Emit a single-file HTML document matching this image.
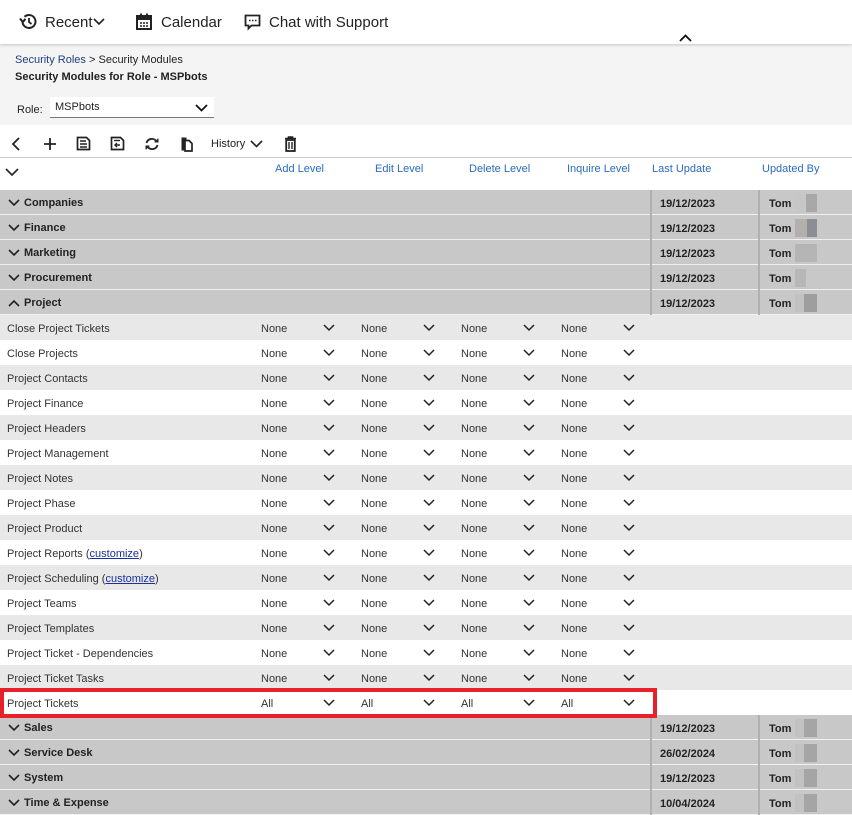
<!DOCTYPE html>
<html><head><meta charset="utf-8"><style>
*{margin:0;padding:0;box-sizing:border-box}
body{width:852px;height:815px;overflow:hidden;background:#fff;font-family:"Liberation Sans",sans-serif;position:relative;color:#222}
.a{position:absolute}
.top{left:0;top:0;width:852px;height:44px;background:#fff;box-shadow:0 1px 3px rgba(0,0,0,.2);z-index:2}
.nav{font-size:15px;color:#222;top:14px}
.grey{left:0;top:44px;width:852px;height:81px;background:#f4f4f4}
.tb{left:0;top:125px;width:852px;height:33px;background:#fff;border-bottom:1px solid #ccc}
.hd{font-size:11px;color:#2a6bbd;top:163px}
.g{left:0;width:852px;height:25px;background:#c8c8c8;border-bottom:1px solid #f0f0f0;font-size:11px;font-weight:bold}
.g .t{position:absolute;left:24px;top:7px}
.g .cv{position:absolute;left:8px;top:9px}
.g .d{position:absolute;left:650px;top:0;width:110px;height:25px;border-left:2px solid #b0b0b0;border-right:2px solid #b0b0b0;padding:8px 0 0 8px}
.g .u{position:absolute;left:769px;top:8px}
.bl{position:absolute;top:4px;width:22px;height:18px;opacity:.7}
.r{left:0;width:852px;height:25px;font-size:11px;color:#333}
.r.o{background:#e8e8e8}
.r .n{position:absolute;left:7px;top:8px}
.r .s{position:absolute;top:8px}
.r svg{position:absolute;top:9px}
a{color:#1a2fa0;text-decoration:underline}
</style></head><body>
<div class="a top">
 <svg class="a" style="left:19px;top:13px" width="18" height="17" viewBox="0 0 18 17"><path d="M3.5 8.5A6.5 6.5 0 1 0 5.5 3.8" fill="none" stroke="#222" stroke-width="2"/><path d="M1 5.5L3.8 9 6.5 5.8" fill="none" stroke="#222" stroke-width="2"/><path d="M10 5v4l2.5 2" fill="none" stroke="#222" stroke-width="1.8"/></svg>
 <div class="a nav" style="left:45px">Recent</div>
 <svg class="a" style="left:93px;top:18px" width="12" height="8"><path d="M1 1l5 5 5-5" fill="none" stroke="#222" stroke-width="1.6"/></svg>
 <svg class="a" style="left:136px;top:13px" width="16" height="17" viewBox="0 0 16 17"><rect x="1" y="3" width="14" height="13" fill="none" stroke="#222" stroke-width="2"/><rect x="1" y="3" width="14" height="4" fill="#222"/><rect x="4" y="0.5" width="2" height="4" fill="#222"/><rect x="10" y="0.5" width="2" height="4" fill="#222"/><path d="M4 10h2M7 10h2M10 10h2M4 13h2M7 13h2M10 13h2" stroke="#222" stroke-width="1.5"/></svg>
 <div class="a nav" style="left:161px">Calendar</div>
 <svg class="a" style="left:244px;top:14px" width="17" height="17" viewBox="0 0 17 17"><path d="M1.5 1.5h14v10h-8l-3 3v-3h-3z" fill="none" stroke="#222" stroke-width="1.8"/><path d="M5 6.5h1.5M8 6.5h1.5M11 6.5h1.5" stroke="#222" stroke-width="1.6"/></svg>
 <div class="a nav" style="left:269px">Chat with Support</div>
 <svg class="a" style="left:679px;top:34px" width="13" height="8"><path d="M1 7l5.5-5.5 5.5 5.5" fill="none" stroke="#111" stroke-width="1.8"/></svg>
</div>
<div class="a grey"></div>
<div class="a" style="left:15px;top:54px;font-size:11px;color:#1f3f7a">Security Roles <span style="color:#222">&gt;</span> <span style="color:#222">Security Modules</span></div>
<div class="a" style="left:15px;top:71px;font-size:11px;font-weight:bold;color:#222">Security Modules for Role - MSPbots</div>
<div class="a" style="left:17px;top:104px;font-size:11px;color:#222">Role:</div>
<div class="a" style="left:50px;top:97px;width:164px;height:21px;background:#fff;border-bottom:1px solid #777"></div>
<div class="a" style="left:55px;top:101px;font-size:11px;color:#222">MSPbots</div>
<svg class="a" style="left:195px;top:104px" width="13" height="8"><path d="M1 1l5.5 5.5 5.5-5.5" fill="none" stroke="#111" stroke-width="1.8"/></svg>
<div class="a tb"></div>
<svg class="a" style="left:11px;top:137px" width="10" height="14"><path d="M8 1L2 7l6 6" fill="none" stroke="#222" stroke-width="1.8"/></svg>
<svg class="a" style="left:43px;top:137px" width="14" height="14"><path d="M7 1v12M1 7h12" stroke="#222" stroke-width="1.8"/></svg>
<svg class="a" style="left:76px;top:136px" width="15" height="15"><path d="M1.5 1.5h9l3 3v9h-12z" fill="none" stroke="#222" stroke-width="1.7"/><path d="M4 5h6M4 8h7M4 11h7" stroke="#222" stroke-width="1.4"/></svg>
<svg class="a" style="left:110px;top:136px" width="15" height="15"><path d="M1.5 1.5h9l3 3v9h-12z" fill="none" stroke="#222" stroke-width="1.7"/><path d="M4 4.5h6" stroke="#222" stroke-width="1.4"/><path d="M10 9H5M7 7L5 9l2 2" fill="none" stroke="#222" stroke-width="1.4"/></svg>
<svg class="a" style="left:144px;top:137px" width="16" height="14"><path d="M2.5 6A5.5 5.5 0 0 1 12.5 4.5M13.5 8A5.5 5.5 0 0 1 3.5 9.5" fill="none" stroke="#222" stroke-width="1.8"/><path d="M10.5 5h3.5V1.5M5.5 9H2v3.5" fill="#222" stroke="#222" stroke-width="1"/></svg>
<svg class="a" style="left:180px;top:136px" width="13" height="16"><path d="M1.5 1.5h5v3h-2v10h-3z" fill="#222"/><path d="M5 4.5h4l3 3v7.5H5z" fill="none" stroke="#222" stroke-width="1.7"/></svg>
<div class="a" style="left:211px;top:138px;font-size:11px;color:#222">History</div>
<svg class="a" style="left:250px;top:140px" width="13" height="8"><path d="M1 1l5.5 5.5 5.5-5.5" fill="none" stroke="#222" stroke-width="1.6"/></svg>
<svg class="a" style="left:284px;top:136px" width="13" height="16"><path d="M1 2.5h11M4.5 2.5V1h4v1.5" stroke="#222" stroke-width="1.6" fill="none"/><rect x="2.2" y="4" width="8.6" height="11" fill="none" stroke="#222" stroke-width="1.8"/><path d="M5 6v7M8 6v7" stroke="#222" stroke-width="1.4"/></svg>
<svg class="a" style="left:5px;top:168px" width="14" height="9"><path d="M1 1l6 6 6-6" fill="none" stroke="#222" stroke-width="1.6"/></svg>
<div class="a hd" style="left:275px">Add Level</div>
<div class="a hd" style="left:375px">Edit Level</div>
<div class="a hd" style="left:469px">Delete Level</div>
<div class="a hd" style="left:567px">Inquire Level</div>
<div class="a hd" style="left:652px">Last Update</div>
<div class="a hd" style="left:762px">Updated By</div>

<div class="a g" style="top:190px"><svg class="cv" width="12" height="8"><path d="M1 1l5 5 5-5" fill="none" stroke="#222" stroke-width="1.6"/></svg><span class="t">Companies</span><div class="d">19/12/2023</div><span class="u">Tom</span><div class="bl" style="left:795px;background:linear-gradient(90deg,#c6c6c6 50%,#9a9a9a 50%)"></div></div>
<div class="a g" style="top:215px"><svg class="cv" width="12" height="8"><path d="M1 1l5 5 5-5" fill="none" stroke="#222" stroke-width="1.6"/></svg><span class="t">Finance</span><div class="d">19/12/2023</div><span class="u">Tom</span><div class="bl" style="left:795px;background:linear-gradient(90deg,#a8a4a2 55%,#727680 55%)"></div></div>
<div class="a g" style="top:240px"><svg class="cv" width="12" height="8"><path d="M1 1l5 5 5-5" fill="none" stroke="#222" stroke-width="1.6"/></svg><span class="t">Marketing</span><div class="d">19/12/2023</div><span class="u">Tom</span><div class="bl" style="left:795px;background:#adadad"></div></div>
<div class="a g" style="top:265px"><svg class="cv" width="12" height="8"><path d="M1 1l5 5 5-5" fill="none" stroke="#222" stroke-width="1.6"/></svg><span class="t">Procurement</span><div class="d">19/12/2023</div><span class="u">Tom</span><div class="bl" style="left:795px;background:linear-gradient(90deg,#b0b0b0 50%,#c8c8c8 50%)"></div></div>
<div class="a g" style="top:290px"><svg class="cv" width="12" height="8"><path d="M1 7l5-5 5 5" fill="none" stroke="#222" stroke-width="1.6"/></svg><span class="t">Project</span><div class="d">19/12/2023</div><span class="u">Tom</span><div class="bl" style="left:795px;background:linear-gradient(90deg,#c0c0c0 40%,#8c8c8c 40%)"></div></div>

<div class="a r o" style="top:315px"><span class="n">Close Project Tickets</span><span class="s" style="left:261px">None</span><svg style="left:323px" width="12" height="8"><path d="M1 1l5 5 5-5" fill="none" stroke="#222" stroke-width="1.5"/></svg><span class="s" style="left:361px">None</span><svg style="left:423px" width="12" height="8"><path d="M1 1l5 5 5-5" fill="none" stroke="#222" stroke-width="1.5"/></svg><span class="s" style="left:461px">None</span><svg style="left:523px" width="12" height="8"><path d="M1 1l5 5 5-5" fill="none" stroke="#222" stroke-width="1.5"/></svg><span class="s" style="left:561px">None</span><svg style="left:623px" width="12" height="8"><path d="M1 1l5 5 5-5" fill="none" stroke="#222" stroke-width="1.5"/></svg></div>
<div class="a r" style="top:340px"><span class="n">Close Projects</span><span class="s" style="left:261px">None</span><svg style="left:323px" width="12" height="8"><path d="M1 1l5 5 5-5" fill="none" stroke="#222" stroke-width="1.5"/></svg><span class="s" style="left:361px">None</span><svg style="left:423px" width="12" height="8"><path d="M1 1l5 5 5-5" fill="none" stroke="#222" stroke-width="1.5"/></svg><span class="s" style="left:461px">None</span><svg style="left:523px" width="12" height="8"><path d="M1 1l5 5 5-5" fill="none" stroke="#222" stroke-width="1.5"/></svg><span class="s" style="left:561px">None</span><svg style="left:623px" width="12" height="8"><path d="M1 1l5 5 5-5" fill="none" stroke="#222" stroke-width="1.5"/></svg></div>
<div class="a r o" style="top:365px"><span class="n">Project Contacts</span><span class="s" style="left:261px">None</span><svg style="left:323px" width="12" height="8"><path d="M1 1l5 5 5-5" fill="none" stroke="#222" stroke-width="1.5"/></svg><span class="s" style="left:361px">None</span><svg style="left:423px" width="12" height="8"><path d="M1 1l5 5 5-5" fill="none" stroke="#222" stroke-width="1.5"/></svg><span class="s" style="left:461px">None</span><svg style="left:523px" width="12" height="8"><path d="M1 1l5 5 5-5" fill="none" stroke="#222" stroke-width="1.5"/></svg><span class="s" style="left:561px">None</span><svg style="left:623px" width="12" height="8"><path d="M1 1l5 5 5-5" fill="none" stroke="#222" stroke-width="1.5"/></svg></div>
<div class="a r" style="top:390px"><span class="n">Project Finance</span><span class="s" style="left:261px">None</span><svg style="left:323px" width="12" height="8"><path d="M1 1l5 5 5-5" fill="none" stroke="#222" stroke-width="1.5"/></svg><span class="s" style="left:361px">None</span><svg style="left:423px" width="12" height="8"><path d="M1 1l5 5 5-5" fill="none" stroke="#222" stroke-width="1.5"/></svg><span class="s" style="left:461px">None</span><svg style="left:523px" width="12" height="8"><path d="M1 1l5 5 5-5" fill="none" stroke="#222" stroke-width="1.5"/></svg><span class="s" style="left:561px">None</span><svg style="left:623px" width="12" height="8"><path d="M1 1l5 5 5-5" fill="none" stroke="#222" stroke-width="1.5"/></svg></div>
<div class="a r o" style="top:415px"><span class="n">Project Headers</span><span class="s" style="left:261px">None</span><svg style="left:323px" width="12" height="8"><path d="M1 1l5 5 5-5" fill="none" stroke="#222" stroke-width="1.5"/></svg><span class="s" style="left:361px">None</span><svg style="left:423px" width="12" height="8"><path d="M1 1l5 5 5-5" fill="none" stroke="#222" stroke-width="1.5"/></svg><span class="s" style="left:461px">None</span><svg style="left:523px" width="12" height="8"><path d="M1 1l5 5 5-5" fill="none" stroke="#222" stroke-width="1.5"/></svg><span class="s" style="left:561px">None</span><svg style="left:623px" width="12" height="8"><path d="M1 1l5 5 5-5" fill="none" stroke="#222" stroke-width="1.5"/></svg></div>
<div class="a r" style="top:440px"><span class="n">Project Management</span><span class="s" style="left:261px">None</span><svg style="left:323px" width="12" height="8"><path d="M1 1l5 5 5-5" fill="none" stroke="#222" stroke-width="1.5"/></svg><span class="s" style="left:361px">None</span><svg style="left:423px" width="12" height="8"><path d="M1 1l5 5 5-5" fill="none" stroke="#222" stroke-width="1.5"/></svg><span class="s" style="left:461px">None</span><svg style="left:523px" width="12" height="8"><path d="M1 1l5 5 5-5" fill="none" stroke="#222" stroke-width="1.5"/></svg><span class="s" style="left:561px">None</span><svg style="left:623px" width="12" height="8"><path d="M1 1l5 5 5-5" fill="none" stroke="#222" stroke-width="1.5"/></svg></div>
<div class="a r o" style="top:465px"><span class="n">Project Notes</span><span class="s" style="left:261px">None</span><svg style="left:323px" width="12" height="8"><path d="M1 1l5 5 5-5" fill="none" stroke="#222" stroke-width="1.5"/></svg><span class="s" style="left:361px">None</span><svg style="left:423px" width="12" height="8"><path d="M1 1l5 5 5-5" fill="none" stroke="#222" stroke-width="1.5"/></svg><span class="s" style="left:461px">None</span><svg style="left:523px" width="12" height="8"><path d="M1 1l5 5 5-5" fill="none" stroke="#222" stroke-width="1.5"/></svg><span class="s" style="left:561px">None</span><svg style="left:623px" width="12" height="8"><path d="M1 1l5 5 5-5" fill="none" stroke="#222" stroke-width="1.5"/></svg></div>
<div class="a r" style="top:490px"><span class="n">Project Phase</span><span class="s" style="left:261px">None</span><svg style="left:323px" width="12" height="8"><path d="M1 1l5 5 5-5" fill="none" stroke="#222" stroke-width="1.5"/></svg><span class="s" style="left:361px">None</span><svg style="left:423px" width="12" height="8"><path d="M1 1l5 5 5-5" fill="none" stroke="#222" stroke-width="1.5"/></svg><span class="s" style="left:461px">None</span><svg style="left:523px" width="12" height="8"><path d="M1 1l5 5 5-5" fill="none" stroke="#222" stroke-width="1.5"/></svg><span class="s" style="left:561px">None</span><svg style="left:623px" width="12" height="8"><path d="M1 1l5 5 5-5" fill="none" stroke="#222" stroke-width="1.5"/></svg></div>
<div class="a r o" style="top:515px"><span class="n">Project Product</span><span class="s" style="left:261px">None</span><svg style="left:323px" width="12" height="8"><path d="M1 1l5 5 5-5" fill="none" stroke="#222" stroke-width="1.5"/></svg><span class="s" style="left:361px">None</span><svg style="left:423px" width="12" height="8"><path d="M1 1l5 5 5-5" fill="none" stroke="#222" stroke-width="1.5"/></svg><span class="s" style="left:461px">None</span><svg style="left:523px" width="12" height="8"><path d="M1 1l5 5 5-5" fill="none" stroke="#222" stroke-width="1.5"/></svg><span class="s" style="left:561px">None</span><svg style="left:623px" width="12" height="8"><path d="M1 1l5 5 5-5" fill="none" stroke="#222" stroke-width="1.5"/></svg></div>
<div class="a r" style="top:540px"><span class="n">Project Reports (<a>customize</a>)</span><span class="s" style="left:261px">None</span><svg style="left:323px" width="12" height="8"><path d="M1 1l5 5 5-5" fill="none" stroke="#222" stroke-width="1.5"/></svg><span class="s" style="left:361px">None</span><svg style="left:423px" width="12" height="8"><path d="M1 1l5 5 5-5" fill="none" stroke="#222" stroke-width="1.5"/></svg><span class="s" style="left:461px">None</span><svg style="left:523px" width="12" height="8"><path d="M1 1l5 5 5-5" fill="none" stroke="#222" stroke-width="1.5"/></svg><span class="s" style="left:561px">None</span><svg style="left:623px" width="12" height="8"><path d="M1 1l5 5 5-5" fill="none" stroke="#222" stroke-width="1.5"/></svg></div>
<div class="a r o" style="top:565px"><span class="n">Project Scheduling (<a>customize</a>)</span><span class="s" style="left:261px">None</span><svg style="left:323px" width="12" height="8"><path d="M1 1l5 5 5-5" fill="none" stroke="#222" stroke-width="1.5"/></svg><span class="s" style="left:361px">None</span><svg style="left:423px" width="12" height="8"><path d="M1 1l5 5 5-5" fill="none" stroke="#222" stroke-width="1.5"/></svg><span class="s" style="left:461px">None</span><svg style="left:523px" width="12" height="8"><path d="M1 1l5 5 5-5" fill="none" stroke="#222" stroke-width="1.5"/></svg><span class="s" style="left:561px">None</span><svg style="left:623px" width="12" height="8"><path d="M1 1l5 5 5-5" fill="none" stroke="#222" stroke-width="1.5"/></svg></div>
<div class="a r" style="top:590px"><span class="n">Project Teams</span><span class="s" style="left:261px">None</span><svg style="left:323px" width="12" height="8"><path d="M1 1l5 5 5-5" fill="none" stroke="#222" stroke-width="1.5"/></svg><span class="s" style="left:361px">None</span><svg style="left:423px" width="12" height="8"><path d="M1 1l5 5 5-5" fill="none" stroke="#222" stroke-width="1.5"/></svg><span class="s" style="left:461px">None</span><svg style="left:523px" width="12" height="8"><path d="M1 1l5 5 5-5" fill="none" stroke="#222" stroke-width="1.5"/></svg><span class="s" style="left:561px">None</span><svg style="left:623px" width="12" height="8"><path d="M1 1l5 5 5-5" fill="none" stroke="#222" stroke-width="1.5"/></svg></div>
<div class="a r o" style="top:615px"><span class="n">Project Templates</span><span class="s" style="left:261px">None</span><svg style="left:323px" width="12" height="8"><path d="M1 1l5 5 5-5" fill="none" stroke="#222" stroke-width="1.5"/></svg><span class="s" style="left:361px">None</span><svg style="left:423px" width="12" height="8"><path d="M1 1l5 5 5-5" fill="none" stroke="#222" stroke-width="1.5"/></svg><span class="s" style="left:461px">None</span><svg style="left:523px" width="12" height="8"><path d="M1 1l5 5 5-5" fill="none" stroke="#222" stroke-width="1.5"/></svg><span class="s" style="left:561px">None</span><svg style="left:623px" width="12" height="8"><path d="M1 1l5 5 5-5" fill="none" stroke="#222" stroke-width="1.5"/></svg></div>
<div class="a r" style="top:640px"><span class="n">Project Ticket - Dependencies</span><span class="s" style="left:261px">None</span><svg style="left:323px" width="12" height="8"><path d="M1 1l5 5 5-5" fill="none" stroke="#222" stroke-width="1.5"/></svg><span class="s" style="left:361px">None</span><svg style="left:423px" width="12" height="8"><path d="M1 1l5 5 5-5" fill="none" stroke="#222" stroke-width="1.5"/></svg><span class="s" style="left:461px">None</span><svg style="left:523px" width="12" height="8"><path d="M1 1l5 5 5-5" fill="none" stroke="#222" stroke-width="1.5"/></svg><span class="s" style="left:561px">None</span><svg style="left:623px" width="12" height="8"><path d="M1 1l5 5 5-5" fill="none" stroke="#222" stroke-width="1.5"/></svg></div>
<div class="a r o" style="top:665px"><span class="n">Project Ticket Tasks</span><span class="s" style="left:261px">None</span><svg style="left:323px" width="12" height="8"><path d="M1 1l5 5 5-5" fill="none" stroke="#222" stroke-width="1.5"/></svg><span class="s" style="left:361px">None</span><svg style="left:423px" width="12" height="8"><path d="M1 1l5 5 5-5" fill="none" stroke="#222" stroke-width="1.5"/></svg><span class="s" style="left:461px">None</span><svg style="left:523px" width="12" height="8"><path d="M1 1l5 5 5-5" fill="none" stroke="#222" stroke-width="1.5"/></svg><span class="s" style="left:561px">None</span><svg style="left:623px" width="12" height="8"><path d="M1 1l5 5 5-5" fill="none" stroke="#222" stroke-width="1.5"/></svg></div>
<div class="a r" style="top:690px"><span class="n">Project Tickets</span><span class="s" style="left:261px">All</span><svg style="left:323px" width="12" height="8"><path d="M1 1l5 5 5-5" fill="none" stroke="#222" stroke-width="1.5"/></svg><span class="s" style="left:361px">All</span><svg style="left:423px" width="12" height="8"><path d="M1 1l5 5 5-5" fill="none" stroke="#222" stroke-width="1.5"/></svg><span class="s" style="left:461px">All</span><svg style="left:523px" width="12" height="8"><path d="M1 1l5 5 5-5" fill="none" stroke="#222" stroke-width="1.5"/></svg><span class="s" style="left:561px">All</span><svg style="left:623px" width="12" height="8"><path d="M1 1l5 5 5-5" fill="none" stroke="#222" stroke-width="1.5"/></svg></div>

<div class="a g" style="top:715px"><svg class="cv" width="12" height="8"><path d="M1 1l5 5 5-5" fill="none" stroke="#222" stroke-width="1.6"/></svg><span class="t">Sales</span><div class="d">19/12/2023</div><span class="u">Tom</span><div class="bl" style="left:795px;background:linear-gradient(90deg,#c0c0c0 40%,#969696 40%)"></div></div>
<div class="a g" style="top:740px"><svg class="cv" width="12" height="8"><path d="M1 1l5 5 5-5" fill="none" stroke="#222" stroke-width="1.6"/></svg><span class="t">Service Desk</span><div class="d">26/02/2024</div><span class="u">Tom</span><div class="bl" style="left:795px;background:linear-gradient(90deg,#c0c0c0 40%,#969696 40%)"></div></div>
<div class="a g" style="top:765px"><svg class="cv" width="12" height="8"><path d="M1 1l5 5 5-5" fill="none" stroke="#222" stroke-width="1.6"/></svg><span class="t">System</span><div class="d">19/12/2023</div><span class="u">Tom</span><div class="bl" style="left:795px;background:linear-gradient(90deg,#c0c0c0 40%,#969696 40%)"></div></div>
<div class="a g" style="top:790px"><svg class="cv" width="12" height="8"><path d="M1 1l5 5 5-5" fill="none" stroke="#222" stroke-width="1.6"/></svg><span class="t">Time &amp; Expense</span><div class="d">10/04/2024</div><span class="u">Tom</span><div class="bl" style="left:795px;background:linear-gradient(90deg,#c0c0c0 40%,#969696 40%)"></div></div>

<div class="a" style="left:0;top:688px;width:657px;height:30px;border:4px solid #e8202a"></div>
</body></html>
